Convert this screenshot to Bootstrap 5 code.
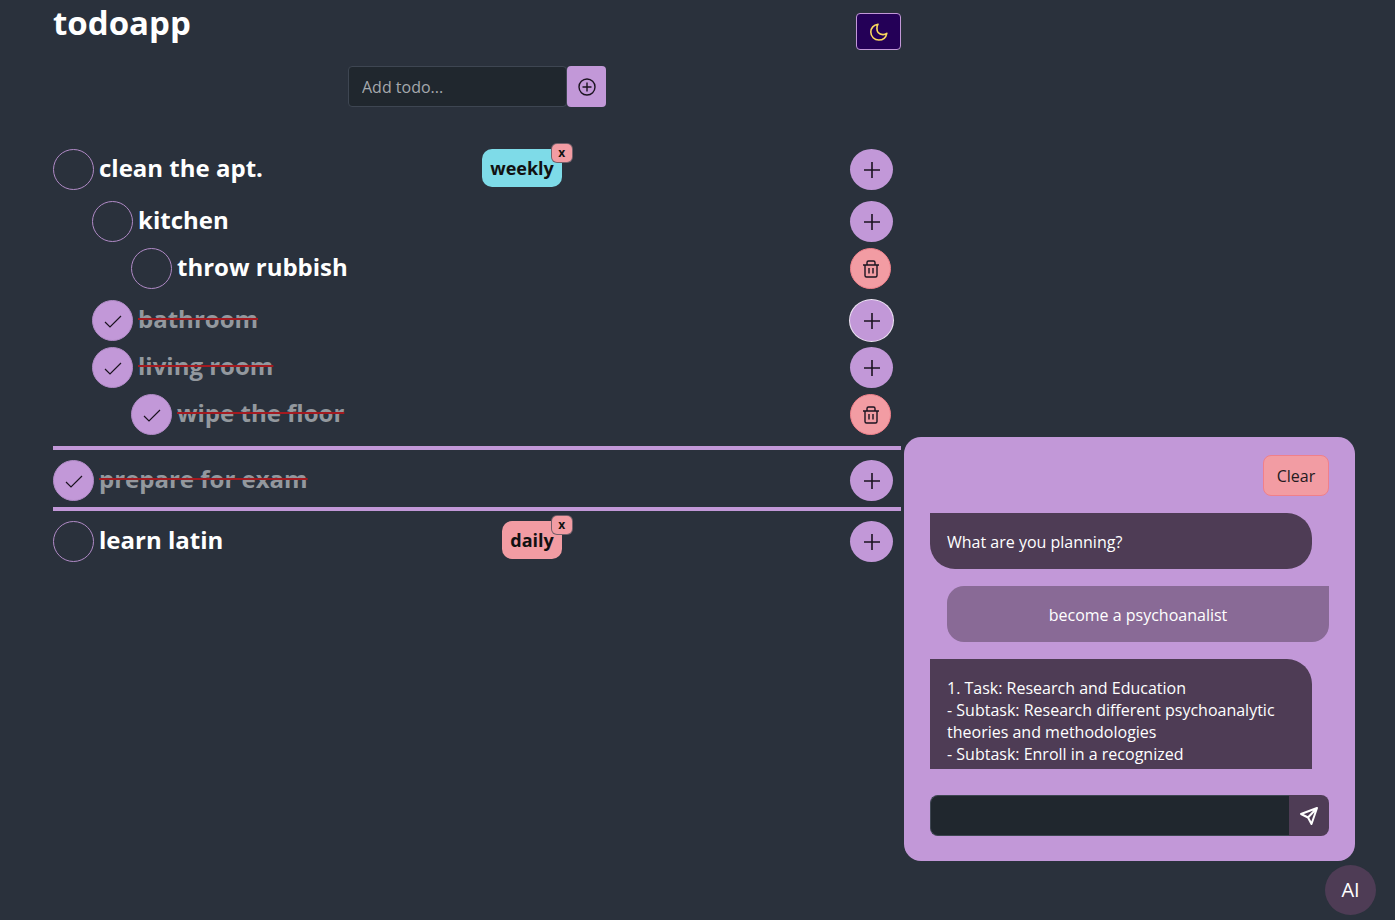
<!DOCTYPE html>
<html lang="en">
<head>
<meta charset="utf-8">
<meta name="viewport" content="width=device-width, initial-scale=1">
<title>todoapp</title>
<link href="https://cdn.jsdelivr.net/npm/bootstrap@5.3.0/dist/css/bootstrap.min.css" rel="stylesheet">
<style>
:root{--field:#20272e;--accent:#c298d8;--plum:#4e3c55;--rose:#f29ca3;--sky:#7edbe8;--ink:#1b1320}
body{background:#2a313c;color:#fff;font-family:"Open Sans","Noto Sans",sans-serif;font-size:16px;line-height:22px;min-height:100vh}
.todo-page{max-width:901px;padding-left:53px}
.app-title{font-size:33px;line-height:46px;font-weight:700;margin:0}
button.theme-btn{width:45px;height:37px;margin-top:13px;background:#240057;border:1px solid var(--accent);color:#fbd85d;border-radius:4px}
.add-form{height:41px;margin-top:16px;margin-bottom:42px}
.add-input{width:219px;padding:0 13px;background:var(--field);color:#fff;border:1px solid #3e4652;border-radius:4px;font-size:16px}
.add-input::placeholder{color:#a5a9ad;opacity:1}
.add-btn{width:39px;background:var(--accent);color:var(--ink);border-radius:4px}
.plain-btn{border:0;padding:0;display:inline-flex;align-items:center;justify-content:center}
.todo-list,.sub-list{list-style:none;margin:0;padding:0}
.todo-list > li + li{border-top:4px solid var(--accent);padding-top:10px}
.sub-list{padding-top:5px}
.sub-list .sub-list{padding:0 0 5px}
.sub-list .sub-list li{padding-left:39px}
.level-two{padding-left:39px}
.todo-row{height:41px;margin-bottom:6px}
.todo-main{flex:0 0 60%;gap:5px}
.round-check{appearance:none;flex:none;width:41px;height:41px;margin:0;border:1px solid #b08ac6;border-radius:50%;background:transparent center/20px no-repeat}
.round-check:checked{background-color:var(--accent);background-image:url("data:image/svg+xml,%3Csvg xmlns='http://www.w3.org/2000/svg' viewBox='0 0 20 20' fill='none' stroke='%231b1320' stroke-width='1.2'%3E%3Cpath d='M2 11l5 5L18 5'/%3E%3C/svg%3E")}
.todo-text{font-size:24px;line-height:38px;font-weight:700;white-space:nowrap}
.round-check:checked + .todo-text{color:#93989e;text-decoration:line-through #a41a20 2px}
.todo-actions{width:51px}
.round-btn{width:43px;height:41px;border-radius:50%;background:var(--accent);color:var(--ink)}
.round-btn.remove{width:41px;background:var(--rose);border:1px solid #f0808a}
.round-btn.active-ring{box-shadow:0 0 0 1px #eee4f4}
.tag{position:relative;height:38px;padding:0 8px;border-radius:10px;color:#111;background:var(--sky);font-size:18px;line-height:38px;font-weight:700}
.tag.daily{background:var(--rose)}
.tag-close{position:absolute;top:-5px;right:-10px;width:20px;height:18px;border-radius:5px;background:var(--rose);box-shadow:0 0 0 1px #74606a;color:#111;font-size:12px;line-height:14px;font-weight:700}
.chat-panel{position:fixed;right:40px;bottom:59px;width:451px;max-width:calc(100vw - 80px);padding:18px 26px 25px;border-radius:17px;background:var(--accent)}
.clear-btn{width:66px;height:41px;background:var(--rose);border:1px solid #f0808a;border-radius:8px;color:#241a20}
.chat-log{height:256px;margin:17px 0 26px;gap:17px;overflow:hidden}
.bubble{flex:none;padding:18px 17px 16px;line-height:22px}
.bubble.bot{margin-right:17px;background:var(--plum);border-radius:0 25px 25px 25px}
.bubble.user{margin-left:17px;background:#896a96;border-radius:17px 0 17px 17px;text-align:center}
.bubble.long{min-height:144px}
.chat-form{height:41px}
.chat-input{flex:1;min-width:0;background:var(--field);color:#fff;border:1px solid #3e4652;border-right:0;border-radius:8px 0 0 8px;padding:0 13px}
.send-btn{width:40px;background:var(--plum);color:#fff;border-radius:0 8px 8px 0}
.ai-btn{position:fixed;right:19px;bottom:5px;width:51px;height:50px;border-radius:50%;background:var(--plum);color:#fff;font-size:20px}
</style>
</head>
<body>
<main class="todo-page">
  <header class="d-flex justify-content-between align-items-start">
    <h1 class="app-title">todoapp</h1>
    <button class="plain-btn theme-btn" type="button" aria-label="Toggle theme">
      <svg width="20" height="20" viewBox="0 0 20 20" fill="none" stroke="currentColor" stroke-width="1.6" stroke-linejoin="round"><path d="M9 2.200C4.600 2.700 1.800 6.200 1.800 10c0 4.600 3.600 8 8 8 4 0 7.200-2.600 8-6.700-1.300 1-2.600 1.400-4 1.300C10.300 12.400 7.900 10 7.900 6.500 7.900 4.900 8.200 3.500 9 2.200z"/></svg>
    </button>
  </header>
  <form class="add-form d-flex justify-content-center">
    <input class="add-input" type="text" placeholder="Add todo..." aria-label="Add todo">
    <button class="add-btn plain-btn" type="button" aria-label="Add">
      <svg width="20" height="20" viewBox="0 0 20 20" fill="none" stroke="currentColor" stroke-width="1.4"><circle cx="10" cy="10" r="8"/><path d="M10 5.500v9M5.500 10h9"/></svg>
    </button>
  </form>

  <ul class="todo-list">
    <li>
      <div class="todo-row d-flex justify-content-between">
        <div class="todo-main d-flex align-items-start"><input class="round-check" type="checkbox" id="t1"><label class="todo-text" for="t1">clean the apt.</label>
          <span class="tag ms-auto">weekly<button class="tag-close plain-btn" type="button">x</button></span></div>
        <div class="todo-actions"><button class="round-btn plain-btn" type="button" aria-label="Add subtask"><svg width="18" height="18" viewBox="0 0 18 18" stroke="currentColor" stroke-width="1.6"><path d="M9 1v16M1 9h16"/></svg></button></div>
      </div>
      <ul class="sub-list">
        <li>
          <div class="todo-row d-flex justify-content-between">
            <div class="todo-main d-flex align-items-start level-two"><input class="round-check" type="checkbox" id="t2"><label class="todo-text" for="t2">kitchen</label></div>
            <div class="todo-actions"><button class="round-btn plain-btn" type="button" aria-label="Add subtask"><svg width="18" height="18" viewBox="0 0 18 18" stroke="currentColor" stroke-width="1.6"><path d="M9 1v16M1 9h16"/></svg></button></div>
          </div>
          <ul class="sub-list"><li>
            <div class="todo-row d-flex justify-content-between">
              <div class="todo-main d-flex align-items-start level-two"><input class="round-check" type="checkbox" id="t3"><label class="todo-text" for="t3">throw rubbish</label></div>
              <div class="todo-actions"><button class="round-btn remove plain-btn" type="button" aria-label="Delete"><svg width="18" height="18" viewBox="0 0 18 18" fill="none" stroke="currentColor" stroke-width="1.4"><path d="M1 5h16M3 5v10.500a1.500 1.500 0 0 0 1.500 1.500h9a1.500 1.500 0 0 0 1.500-1.500V5M5 5V2.500A1.500 1.500 0 0 1 6.500 1h5A1.500 1.500 0 0 1 13 2.500V5M7 8v5.500M11 8v5.500"/></svg></button></div>
            </div>
          </li></ul>
        </li>
        <li>
          <div class="todo-row d-flex justify-content-between">
            <div class="todo-main d-flex align-items-start level-two"><input class="round-check" type="checkbox" id="t4" checked><label class="todo-text" for="t4">bathroom</label></div>
            <div class="todo-actions"><button class="round-btn active-ring plain-btn" type="button" aria-label="Add subtask"><svg width="18" height="18" viewBox="0 0 18 18" stroke="currentColor" stroke-width="1.6"><path d="M9 1v16M1 9h16"/></svg></button></div>
          </div>
        </li>
        <li>
          <div class="todo-row d-flex justify-content-between">
            <div class="todo-main d-flex align-items-start level-two"><input class="round-check" type="checkbox" id="t5" checked><label class="todo-text" for="t5">living room</label></div>
            <div class="todo-actions"><button class="round-btn plain-btn" type="button" aria-label="Add subtask"><svg width="18" height="18" viewBox="0 0 18 18" stroke="currentColor" stroke-width="1.6"><path d="M9 1v16M1 9h16"/></svg></button></div>
          </div>
          <ul class="sub-list"><li>
            <div class="todo-row d-flex justify-content-between">
              <div class="todo-main d-flex align-items-start level-two"><input class="round-check" type="checkbox" id="t6" checked><label class="todo-text" for="t6">wipe the floor</label></div>
              <div class="todo-actions"><button class="round-btn remove plain-btn" type="button" aria-label="Delete"><svg width="18" height="18" viewBox="0 0 18 18" fill="none" stroke="currentColor" stroke-width="1.4"><path d="M1 5h16M3 5v10.500a1.500 1.500 0 0 0 1.500 1.500h9a1.500 1.500 0 0 0 1.500-1.500V5M5 5V2.500A1.500 1.500 0 0 1 6.500 1h5A1.500 1.500 0 0 1 13 2.500V5M7 8v5.500M11 8v5.500"/></svg></button></div>
            </div>
          </li></ul>
        </li>
      </ul>
    </li>
    <li>
      <div class="todo-row d-flex justify-content-between">
        <div class="todo-main d-flex align-items-start"><input class="round-check" type="checkbox" id="t7" checked><label class="todo-text" for="t7">prepare for exam</label></div>
        <div class="todo-actions"><button class="round-btn plain-btn" type="button" aria-label="Add subtask"><svg width="18" height="18" viewBox="0 0 18 18" stroke="currentColor" stroke-width="1.6"><path d="M9 1v16M1 9h16"/></svg></button></div>
      </div>
    </li>
    <li>
      <div class="todo-row d-flex justify-content-between">
        <div class="todo-main d-flex align-items-start"><input class="round-check" type="checkbox" id="t8"><label class="todo-text" for="t8">learn latin</label>
          <span class="tag daily ms-auto">daily<button class="tag-close plain-btn" type="button">x</button></span></div>
        <div class="todo-actions"><button class="round-btn plain-btn" type="button" aria-label="Add subtask"><svg width="18" height="18" viewBox="0 0 18 18" stroke="currentColor" stroke-width="1.6"><path d="M9 1v16M1 9h16"/></svg></button></div>
      </div>
    </li>
  </ul>
</main>

<section class="chat-panel" aria-label="Assistant">
  <div class="d-flex justify-content-end"><button class="clear-btn" type="button">Clear</button></div>
  <div class="chat-log d-flex flex-column">
    <div class="bubble bot">What are you planning?</div>
    <div class="bubble user">become a psychoanalist</div>
    <div class="bubble bot long">1. Task: Research and Education<br>- Subtask: Research different psychoanalytic theories and methodologies<br>- Subtask: Enroll in a recognized</div>
  </div>
  <form class="chat-form d-flex">
    <input class="chat-input" type="text" aria-label="Message">
    <button class="send-btn plain-btn" type="button" aria-label="Send"><svg width="20" height="20" viewBox="0 0 20 20" fill="none" stroke="currentColor" stroke-width="2" stroke-linejoin="round"><path d="M18 2L2 8l7 3.500L12.500 18zM18 2L9 11.500"/></svg></button>
  </form>
</section>
<button class="ai-btn plain-btn" type="button">AI</button>
<script src="https://cdn.jsdelivr.net/npm/bootstrap@5.3.0/dist/js/bootstrap.bundle.min.js"></script>
</body>
</html>
